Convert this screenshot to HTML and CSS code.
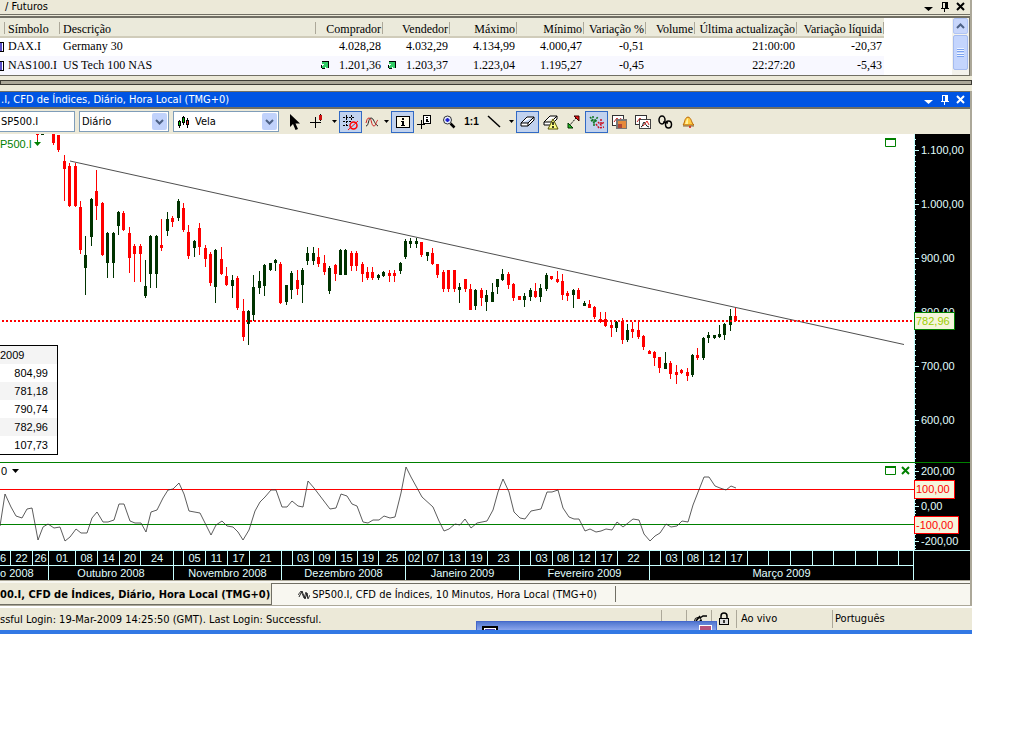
FILE: index.html
```
<!DOCTYPE html>
<html lang="pt">
<head>
<meta charset="utf-8">
<title>SP500.I, CFD de Índices, Diário</title>
<link rel="stylesheet" href="styles.css">
</head>
<body>
<main class="app">
  <section class="quotes">
    <header class="caption">
      <span class="caption-text">/ Futuros</span>
      <button class="cap-btn" aria-label="Menu"><svg width="9" height="10"><path d="M0 5h9L4.5 9z"/></svg></button>
      <button class="cap-btn" aria-label="Fixar"><svg width="9" height="10"><path d="M2 0h6v6h1v1H5v3H4V7H1V6h1zM3 1v5h2V1z" fill-rule="evenodd"/></svg></button>
      <button class="cap-btn" aria-label="Fechar"><svg width="9" height="10"><path d="M1 1l7 7M8 1L1 8" class="cross"/></svg></button>
    </header>
    <div class="quotes-body">
      <table class="quote-table">
        <colgroup><col class="c-mark"><col class="c-sym"><col class="c-desc"><col class="c-price"><col class="c-price"><col class="c-price"><col class="c-price"><col class="c-var"><col class="c-vol"><col class="c-upd"><col class="c-net"></colgroup>
        <thead><tr><th></th><th class="l">Símbolo</th><th class="l">Descrição</th><th>Comprador</th><th>Vendedor</th><th>Máximo</th><th>Mínimo</th><th>Variação %</th><th>Volume</th><th>Última actualização</th><th>Variação líquida</th></tr></thead>
        <tbody>
          <tr><td class="mark"><i></i></td><td class="l">DAX.I</td><td class="l">Germany 30</td><td>4.028,28</td><td>4.032,29</td><td>4.134,99</td><td>4.000,47</td><td>-0,51</td><td></td><td>21:00:00</td><td>-20,37</td></tr>
          <tr><td class="mark"><i></i></td><td class="l">NAS100.I</td><td class="l">US Tech 100 NAS</td><td><span class="tick"><svg width="8" height="8" shape-rendering="crispEdges"><path d="M1 1h6v6H5V5L3 7H1V5l2-2H1z" fill="#3c6"/><path d="M1 0h7v7H7V1H1zM0 4h1v3h3v1H1V7H0z" fill="#000"/></svg>1.201,36</span></td><td><span class="tick"><svg width="8" height="8" shape-rendering="crispEdges"><path d="M1 1h6v6H5V5L3 7H1V5l2-2H1z" fill="#3c6"/><path d="M1 0h7v7H7V1H1zM0 4h1v3h3v1H1V7H0z" fill="#000"/></svg>1.203,37</span></td><td>1.223,04</td><td>1.195,27</td><td>-0,45</td><td></td><td>22:27:20</td><td>-5,43</td></tr>
        </tbody>
      </table>
      <div class="scroll">
        <button class="scroll-up" aria-label="Subir"><svg width="9" height="6"><path d="M1 5l3.500-3.500L8 5" fill="none" stroke="#4d6185" stroke-width="2"/></svg></button>
        <div class="thumb"><i></i><i></i><i></i><i></i></div>
      </div>
    </div>
  </section>
  <div class="splitter"></div>
  <section class="chart-window">
    <header class="caption active">
      <h1 class="caption-text">.I, CFD de Índices, Diário, Hora Local (TMG+0)</h1>
      <button class="cap-btn" aria-label="Menu"><svg width="9" height="10"><path d="M0 5h9L4.500 9z"/></svg></button>
      <button class="cap-btn" aria-label="Fixar"><svg width="9" height="10"><path d="M2 0h6v6h1v1H5v3H4V7H1V6h1zM3 1v5h2V1z" fill-rule="evenodd"/></svg></button>
      <button class="cap-btn" aria-label="Fechar"><svg width="9" height="10"><path d="M1 1l7 7M8 1L1 8" class="cross"/></svg></button>
    </header>
    <div class="toolbar">
      <input class="symbol" aria-label="Símbolo" value="SP500.I">
      <div class="combo period"><select aria-label="Período"><option>Diário</option></select><span class="drop"><svg width="9" height="6"><path d="M1 1l3.500 3.500L8 1" fill="none" stroke="#4d6185" stroke-width="2"/></svg></span></div>
      <div class="combo style"><svg class="combo-icon" width="13" height="14" shape-rendering="crispEdges"><path d="M2 5h1v8H2zM6 1h1v9H6zM10 3h1v10h-1z"/><path d="M1 6h3v5H1zM5 2h3v6H5zM9 5h3v5H9z"/><path d="M2 7h1v3H2zM6 3h1v4H6z" fill="#0c0"/><path d="M10 6h1v3h-1z" fill="#e22"/></svg><select aria-label="Estilo"><option>Vela</option></select><span class="drop"><svg width="9" height="6"><path d="M1 1l3.500 3.500L8 1" fill="none" stroke="#4d6185" stroke-width="2"/></svg></span></div>
      <button class="tool" aria-label="Cursor"><svg width="18" height="18"><path d="M4 1v13l3-3 2.500 6 2.500-1-2.500-5.500H14z" fill="#000"/></svg></button>
      <button class="tool" aria-label="Mira"><svg width="18" height="18" shape-rendering="crispEdges"><path d="M6 4h1v11H6zM1 9h11v1H1zM11 1h1v7h-1z"/><path d="M10 2h3v5h-3z" fill="#c11"/></svg></button>
      <button class="more" aria-label="Mais"><svg width="5" height="3"><path d="M0 0h5L2.500 3z"/></svg></button>
      <button class="tool on" aria-label="Grelha"><svg width="18" height="18"><path d="M4.500 2v12M9.500 2v6M1 4.500h12M1 8.500h8M1 12.500h6" stroke="#000" fill="none" stroke-dasharray="2 1"/><circle cx="11.500" cy="12.500" r="3.500" fill="none" stroke="#f00" stroke-width="1.500"/><path d="M6 17L16 8" stroke="#f00"/></svg></button>
      <button class="tool slim" aria-label="Indicador"><svg width="14" height="12"><path d="M1 10c3 0 2-8 5-8s3 6 7 8" fill="none" stroke="#222"/><path d="M1 7c1-3 1-5 3-5 3 0 2 8 5 8 2 0 2-5 4-6" fill="none" stroke="#c22"/></svg></button>
      <button class="more" aria-label="Mais"><svg width="5" height="3"><path d="M0 0h5L2.500 3z"/></svg></button>
      <button class="tool on" aria-label="Informação"><svg width="18" height="18" shape-rendering="crispEdges"><path d="M2 3h14v12H2z"/><path d="M3 4h12v10H3z" fill="#fffbe8"/><path d="M8 5h2v2H8zM7 8h3v4h1v1H7v-1h1V9H7z"/></svg></button>
      <button class="tool" aria-label="Nota"><svg width="18" height="18" shape-rendering="crispEdges"><path d="M4 7h1v9H4zM0 11h8v1H0zM6 2h8v9H6z"/><path d="M7 3h6v7H7z" fill="#fff"/><path d="M9 4h2v1H9zM9 6h2v2h1v1H9z"/></svg></button>
      <button class="tool" aria-label="Ampliar"><svg width="18" height="18"><circle cx="7.500" cy="7" r="4" fill="#e6efff" stroke="#333"/><path d="M7.500 5v4M5.500 7h4" stroke="#22c" stroke-width="2"/><path d="M10.500 10.500l4 4" stroke="#000" stroke-width="2.500"/></svg></button>
      <button class="tool ratio" aria-label="Escala">1:1</button>
      <button class="tool" aria-label="Linha"><svg width="18" height="18"><path d="M2 3l12 11" stroke="#000" stroke-width="1.500"/></svg></button>
      <button class="more" aria-label="Mais"><svg width="5" height="3"><path d="M0 0h5L2.500 3z"/></svg></button>
      <button class="tool on" aria-label="Apagar"><svg width="18" height="18"><path d="M2 10l6-6h7l-6 6zM2 10v3h7l6-6V4M9 10v3" fill="#fff" stroke="#000"/></svg></button>
      <button class="tool" aria-label="Apagar tudo"><svg width="18" height="18"><path d="M2 9l6-6h7l-6 6zM2 9v3h7l6-6V3" fill="#fff" stroke="#000"/><path d="M11 6l5 10H6z" fill="#ff8" stroke="#550"/><path d="M11 9v3M11 13v2" stroke="#000" stroke-width="1.500"/></svg></button>
      <button class="tool" aria-label="Medir"><svg width="18" height="18"><path d="M4 13l8-9" stroke="#000" stroke-dasharray="2 1"/><path d="M9 3h5v5z" fill="#e11" stroke="#300"/><path d="M3 10v5h5z" fill="#2b2" stroke="#030"/></svg></button>
      <button class="tool on" aria-label="Dados"><svg width="18" height="18"><path d="M2 4l4 4 4-4M6 8v5M3 7l3 3 3-3M5 3v3" stroke="#172" stroke-width="1.500" stroke-dasharray="2 1" fill="none"/><path d="M13 6v6M8 11l3 4 5-1M10 9l3 3 3-3" stroke="#c12" stroke-width="1.500" stroke-dasharray="2 1" fill="none"/></svg></button>
      <button class="tool" aria-label="Copiar imagem"><svg width="18" height="18"><rect x="1.500" y="2.500" width="11" height="10" fill="#fff" stroke="#333"/><path d="M3 9l3-4 2 3 2-3" stroke="#c22" fill="none"/><rect x="5" y="6" width="11" height="10" fill="#777"/><rect x="7" y="8" width="8" height="7" fill="#e58a3c"/><path d="M7 11h4v4H7z" fill="#b04838"/></svg></button>
      <button class="tool" aria-label="Copiar gráfico"><svg width="18" height="18"><rect x="1.500" y="2.500" width="11" height="9" fill="#fff" stroke="#333"/><path d="M3 9l3-4 2 3" stroke="#c22" fill="none"/><rect x="5.500" y="6.500" width="11" height="9" fill="#fff" stroke="#444"/><path d="M7 14c2 0 2-5 3-5s2 5 5 5" fill="none" stroke="#111"/><path d="M9 13l4-5 2 4" fill="none" stroke="#d22"/></svg></button>
      <button class="tool" aria-label="Ligar"><svg width="18" height="18"><ellipse cx="5" cy="7" rx="3" ry="4" fill="none" stroke="#000" stroke-width="1.500"/><ellipse cx="11.500" cy="11.500" rx="3" ry="3.500" fill="none" stroke="#000" stroke-width="1.500"/><path d="M6 9l5 1" stroke="#000" stroke-width="1.500"/></svg></button>
      <button class="tool" aria-label="Alerta"><svg width="16" height="16"><path d="M2 11c2-2 1-7 5-8 4 1 3 6 6 8z" fill="#fc4" stroke="#b60"/><path d="M7 4c-2 2-2 4-3 6h3z" fill="#fff3a0"/><path d="M2 12h11" stroke="#863"/><circle cx="9" cy="13" r="1" fill="#d11"/></svg></button>
    </div>
    <div class="chart">
      <div class="price-plot">
        <svg id="price" class="plot" viewBox="0 0 914 328" preserveAspectRatio="none" role="img" aria-label="Gráfico de velas"></svg>
        <span class="series-label">P500.I<svg width="7" height="10"><path d="M3 3h1v2h3L3.500 9 0 5h3z" fill="#008000"/></svg></span>
        <button class="pane-btn" aria-label="Maximizar"><svg width="11" height="9"><path d="M0.500 1v7.500h10V1" fill="none" stroke="#008000"/><path d="M0 1h11" stroke="#008000" stroke-width="2"/></svg></button>
        <table class="ohlc">
          <tbody><tr><td class="l">2009</td></tr><tr><td>804,99</td></tr><tr><td>781,18</td></tr><tr><td>790,74</td></tr><tr><td>782,96</td></tr><tr><td>107,73</td></tr></tbody>
        </table>
      </div>
      <svg class="axis" id="priceAxis" width="56" height="328" shape-rendering="crispEdges"></svg>
      <div class="cci-plot">
        <svg id="cci" class="plot" viewBox="0 0 914 87" preserveAspectRatio="none" role="img" aria-label="Indicador CCI"></svg>
        <button class="cci-label">0 <svg width="7" height="4"><path d="M0 0h7L3.500 4z"/></svg></button>
        <div class="pane-tools">
          <button class="pane-icon" aria-label="Maximizar"><svg width="11" height="9"><path d="M0.500 1v7.500h10V1" fill="none" stroke="#008000"/><path d="M0 1h11" stroke="#008000" stroke-width="2"/></svg></button>
          <button class="pane-icon" aria-label="Fechar"><svg width="9" height="9"><path d="M1 1l7 7M8 1L1 8" stroke="#008000" stroke-width="2"/></svg></button>
        </div>
      </div>
      <svg class="axis lower" id="cciAxis" width="56" height="87" shape-rendering="crispEdges"></svg>
      <div class="dates"><div class="date-row" id="days"></div><div class="date-row" id="months"></div></div>
      <div class="corner"></div>
    </div>
  </section>
  <nav class="tabs">
    <button class="tab current">00.I, CFD de Índices, Diário, Hora Local (TMG+0)</button>
    <button class="tab"><svg width="12" height="12"><path d="M0 6l3-4 3 7 2-6 2 7 2-4" fill="none" stroke="#444"/><path d="M1 8l3-6 3 8 2-6 1 5" fill="none" stroke="#222"/></svg>SP500.I, CFD de Índices, 10 Minutos, Hora Local (TMG+0)</button>
  </nav>
  <footer class="status">
    <span class="login">ssful Login: 19-Mar-2009 14:25:50 (GMT). Last Login: Successful.</span>
    <span class="cell tiny"></span>
    <span class="cell tiny"><svg width="14" height="14"><circle cx="5" cy="9" r="3.500" fill="none" stroke="#000"/><path d="M3 9l4-5M7 6l3-2h4M5 12l3-4" fill="none" stroke="#000" stroke-width="1.500"/></svg></span>
    <span class="cell tiny"><svg width="12" height="14"><path d="M3 6V4a3 3 0 0 1 6 0v2" fill="none" stroke="#000" stroke-width="1.500"/><rect x="1.500" y="6.500" width="9" height="6" fill="#ddd" stroke="#000"/><path d="M6 8v3" stroke="#000" stroke-width="1.500"/></svg></span>
    <span class="cell live">Ao vivo</span>
    <span class="cell lang">Português</span>
    <div class="popup"><svg width="17" height="6" shape-rendering="crispEdges"><path d="M0 1h16v5H0z"/><path d="M2 3h12v3H2z" fill="#fff"/><path d="M3 4h10v2H3z" fill="#4646b8"/></svg><i></i></div>
  </footer>
</main>
<script src="chart.js"></script>
</body>
</html>
```

FILE: styles.css
```
* { box-sizing: border-box; }
body { margin: 0; background: #fff; color: #000; font: 11px/14px "Liberation Sans", Arial, sans-serif; }
button, input, select { font: inherit; color: inherit; }
button { border: 0; padding: 0; background: none; display: flex; align-items: center; justify-content: center; }
svg { display: block; flex: none; }
.app { margin-right: 52px; background: #ece9d8; overflow: hidden; border-bottom: 4px solid #3278e4; }
.caption-text { font: 11px/14px "DejaVu Sans Condensed", "Noto Sans", sans-serif; }
.quotes, .chart-window { border-right: 2px solid #aca899; }

.caption { display: flex; align-items: center; height: 15px; gap: 7px; padding: 0 5px 1px 5px; border-bottom: 1px solid #716f64; }
.caption-text { flex: 1; margin: 0; white-space: nowrap; }
.cap-btn svg { fill: #000; }
.cross { fill: none; stroke: #000; stroke-width: 2; }
.caption.active { height: 17px; margin-top: 6px; padding: 1px 5px 0 1px; background: #0054e3; color: #fff; border-top: 1px solid #716f64; }
.caption.active .cap-btn svg { fill: #fff; }
.caption.active .cross { stroke: #fff; }

.quotes-body { display: flex; justify-content: space-between; height: 60px; margin-top: 1px; background: #fff; border: solid #716f64; border-width: 2px 1px 1px 0; }
.quote-table { width: 884px; table-layout: fixed; border-collapse: collapse; font: 12px/14px "Liberation Serif", "Times New Roman", serif; }
.c-mark { width: 5px; } .c-sym { width: 55px; } .c-desc { width: 256px; } .c-price { width: 67px; }
.c-var { width: 62px; } .c-vol { width: 49px; } .c-upd { width: 102px; } .c-net { width: 87px; }
.quote-table th, .quote-table td { padding: 0 2px 2px; text-align: right; white-space: nowrap; font-weight: normal; }
.quote-table .l { text-align: left; padding-left: 3px; }
.quote-table th { height: 19px; padding: 3px 2px 0; background: linear-gradient(#aca899, #aca899) right 60% / 1px 12px no-repeat #ebeadb; border-bottom: 2px solid #d0ccba; }
.quote-table td { height: 19px; }
.quote-table tr:nth-child(2) td { background: #f8f8ff; }
.quote-table .mark { padding: 0; }
.mark i { display: block; width: 4px; height: 10px; border: 1px solid #000; border-left: 0; background: linear-gradient(90deg, #5a4fc8 2px, #fff 2px); }
.tick { display: flex; justify-content: space-between; align-items: center; padding-left: 3px; }
.scroll { width: 17px; background: #f3f2ec; padding: 0 1px; display: flex; flex-direction: column; gap: 1px; }
.scroll-up { width: 15px; height: 16px; background: #c8d6fb; border: 1px solid #b0c4f4; border-radius: 2px; }
.thumb { height: 35px; padding: 12px 3px; background: #c4d5fd; border: 1px solid #a5bbef; border-radius: 2px; display: grid; }
.thumb i { height: 2px; background: #eef4fe; border-bottom: 1px solid #7ba2f0; }
.splitter { height: 5px; margin-top: 4px; background: #aca899; border: 1px solid #3d3b34; }

.toolbar { display: flex; align-items: center; height: 26px; border-top: 1px solid #716f64; }
.symbol { width: 75px; height: 21px; padding: 0 1px; border: 1px solid #7f9db9; border-left: 0; background: #fff; font-family: "DejaVu Sans Condensed", sans-serif; }
.combo { position: relative; height: 21px; display: flex; align-items: center; border: 1px solid #7f9db9; background: #fff; }
.period { width: 90px; margin-left: 4px; }
.style { width: 106px; margin: 0 4px; padding-left: 3px; }
.combo select { flex: 1; min-width: 0; appearance: none; border: 0; background: none; padding: 0 2px; font-family: "DejaVu Sans Condensed", sans-serif; }
.style select { padding-left: 5px; }
.drop { width: 15px; height: 17px; margin-right: 1px; background: #c1d2fb; border-radius: 2px; display: grid; place-items: center; }
.tool { width: 23px; height: 22px; flex: none; }
.tool.slim { width: 19px; }
.tool.on { background: #c1d2ee; border: 1px solid #316ac5; }
.tool.ratio { font-weight: bold; font-size: 10px; }
.more { width: 10px; height: 22px; flex: none; }

.chart { display: grid; grid-template-columns: 1fr 56px; background: #fff; }
.price-plot, .cci-plot { position: relative; overflow: hidden; }
.price-plot { height: 328px; }
.cci-plot { height: 88px; border-top: 1px solid #008000; }
.plot { width: 100%; height: 100%; }
.axis { background: #000; }
.lower { border-top: 1px solid #008000; height: 88px; }
.axis text { fill: #e0ffff; font: 11px "Liberation Sans", Arial, sans-serif; }
.axis .hot { fill: #f00; }
.axis .last { fill: #9acd00; }
.series-label { position: absolute; left: 0; top: 3px; display: flex; gap: 2px; color: #008000; }
.pane-btn { position: absolute; right: 18px; top: 4px; }
.pane-tools { position: absolute; right: 4px; top: 3px; display: flex; gap: 5px; }
.cci-label { position: absolute; left: 1px; top: 1px; gap: 5px; }
.ohlc { position: absolute; left: 0; top: 211px; width: 58px; border: 1px solid #000; border-left: 0; border-collapse: separate; border-spacing: 0; background: #fff; line-height: 18px; }
.ohlc td { padding: 0 9px 0 0; text-align: right; }
.ohlc td.l { text-align: left; padding: 0; }
.ohlc tr:nth-child(odd) { background: #f4f4f4; }
.dates { background: #000; color: #e0ffff; }
.date-row { display: grid; height: 15px; border-top: 1px solid #c8ffff; line-height: 15px; }
.date-row span { min-width: 0; border-right: 1px solid #c8ffff; text-align: center; white-space: nowrap; overflow: hidden; }
.date-row span:first-child { text-align: left; }
.corner { background: #000; border-top: 1px solid #c8ffff; }

.tabs { display: flex; height: 26px; background: linear-gradient(#716f64, #716f64) 0 3px / 100% 1px no-repeat, linear-gradient(#aca899, #aca899) 0 0 / 100% 1px no-repeat #f8f7f0; border: solid #aca899; border-width: 0 2px 1px 0; padding-top: 3px; }
.tab { padding: 2px 19px 0 26px; gap: 2px; white-space: nowrap; font-family: "DejaVu Sans Condensed", sans-serif; }
.tab:not(.current) { background: linear-gradient(#716f64, #716f64) right 50% / 1px 16px no-repeat; }
.tab.current { padding: 2px 1px 0 0; font-weight: bold; background: #ece9d8; border: solid #716f64; border-width: 0 1px 1px 0; }
.status { position: relative; display: flex; height: 24px; padding-top: 2px; border-top: 2px solid #fff; font-family: "DejaVu Sans Condensed", sans-serif; }
.status span { display: flex; align-items: center; }
.login { flex: 1; white-space: nowrap; }
.cell { border-left: 1px solid #aca899; padding-left: 4px; height: 18px; }
.tiny { width: 25px; padding-left: 6px; }
.live { width: 96px; }
.lang { width: 140px; padding-left: 2px; }
.popup { position: absolute; right: 255px; bottom: 0; width: 241px; height: 9px; padding: 3px 4px 0 5px; display: flex; justify-content: space-between; background: linear-gradient(#5076cf, #8ba5ec); border: 1px solid #4667ca; border-bottom: 0; }
.popup i { width: 13px; background: #b5527c; border: 1px solid #fff; border-bottom: 0; }
```

FILE: chart.js
```
const NS = "http://www.w3.org/2000/svg";
const add = (svg, name, attrs, text) => {
  const el = document.createElementNS(NS, name);
  for (const key in attrs) el.setAttribute(key, attrs[key]);
  if (text) el.textContent = text;
  svg.appendChild(el);
};

/* direction (d = down, u = up), x, high, body top, body bottom, low */
const candles = `d37,0,0,1,9 u42,0,0,1,1 d53,0,0,9,11 d58,1,1,16,18 d64,21,27,35,67 d69,29,32,72,73 d75,29,32,72,73 d80,67,73,116,120
u85,102,121,134,161 u91,64,65,103,112 d96,36,57,72,86 d102,68,69,121,122 u107,98,99,129,144 u113,98,99,129,144
u118,77,78,92,101 d123,77,79,96,97 d129,93,99,124,139 d134,110,112,120,148 d140,110,112,120,148 u145,126,152,162,164
u150,101,102,140,154 u156,101,102,140,154 d161,85,111,114,117 u167,78,85,97,102 d172,82,84,88,93 u178,65,67,84,87
d183,69,74,96,98 d188,91,98,122,125 u194,106,107,114,123 d199,89,94,113,121 d205,111,114,125,133 d210,118,120,149,152
u215,115,116,153,169 d221,113,125,140,141 d226,133,142,151,152 u232,141,146,152,164 d237,142,144,174,176
d243,165,177,203,207 u248,176,177,190,211 u253,141,153,181,187 u259,137,147,154,160 u264,130,131,152,162
u270,129,129,136,137 u275,125,126,129,137 d280,128,130,169,170 u286,151,151,168,171 u291,137,139,156,165
d297,136,146,155,161 u302,134,136,151,169 u307,113,119,127,131 u313,113,119,127,131 d318,114,123,130,133
d324,121,129,138,141 u329,132,134,157,160 d335,130,131,140,147 u340,115,116,141,141 u345,115,116,141,141
d351,117,119,132,137 d356,117,119,132,137 d362,128,130,140,148 d367,133,138,144,146 d372,133,138,144,146
u378,140,141,144,146 u383,137,138,142,143 d389,136,139,142,148 d394,136,139,142,148 u400,128,129,137,140
u405,105,107,123,125 u410,104,107,110,114 u416,104,107,110,114 d421,108,108,121,123 u427,118,118,122,127
d432,114,119,130,131 d437,130,130,141,144 d443,136,138,155,158 d448,136,136,155,158 d454,136,136,155,158
u459,149,153,156,169 d465,145,145,155,158 d470,150,155,176,176 u475,155,156,172,176 d481,154,156,164,172
u486,156,161,168,177 u492,149,158,168,168 u497,145,145,153,160 u502,135,140,146,147 d508,138,140,151,155
d513,149,150,164,167 d519,162,162,166,166 u524,159,162,166,173 u530,154,156,163,167 d535,149,157,163,164
u540,150,154,163,168 u546,139,141,155,157 d551,142,142,145,146 d557,137,145,148,149 d562,140,147,161,166
d567,157,159,162,167 u573,155,156,161,174 d578,154,156,165,165 u584,167,169,172,172 d589,166,170,174,174
d594,172,173,183,185 d600,178,185,188,189 d605,178,185,192,193 d611,188,191,194,203 u616,187,188,194,198
d622,184,187,206,210 u627,190,196,206,208 d632,188,195,198,204 d638,188,196,203,205 d643,201,202,213,216
d649,216,217,220,220 d654,217,218,224,232 d659,223,223,234,239 u665,218,229,235,235 d670,227,229,240,245
d676,231,238,241,250 d681,235,236,239,240 d687,234,238,242,247 u692,220,221,241,243 d697,214,221,224,226
u703,203,204,224,226 u708,198,201,204,209 u714,201,201,204,205 u719,191,200,203,204 u724,189,190,201,206
u730,175,182,191,197 d735,174,182,187,188`.split(/\s+/);

const price = document.getElementById("price");
for (const c of candles) {
  const fill = c[0] === "d" ? "#ff0000" : "#003300";
  const [x, high, top, bottom, low] = c.slice(1).split(",").map(Number);
  add(price, "rect", { x, y: high, width: 1, height: low - high, fill, "shape-rendering": "crispEdges" });
  add(price, "rect", { x: x - 1, y: top, width: 3, height: bottom - top, fill, "shape-rendering": "crispEdges" });
}
add(price, "path", { d: "M70 27L904 210.5", stroke: "#222", "stroke-width": 0.8 });
add(price, "path", { d: "M2 187H914", stroke: "#ff0000", "stroke-width": 2, "stroke-dasharray": "2 2", "shape-rendering": "crispEdges" });

const cci = document.getElementById("cci");
add(cci, "path", { d: "M0 26.5H914", stroke: "#ff0000", "shape-rendering": "crispEdges" });
add(cci, "path", { d: "M0 61.5H914", stroke: "#008000", "shape-rendering": "crispEdges" });
add(cci, "polyline", { fill: "none", stroke: "#333", "stroke-width": 0.8, points: `0,63 5,31 11,44 16,53 22,55 27,46 32,45 38,77 43,64 48,61 54,65
60,64 65,78 70,74 76,66 81,70 87,70 92,55 97,49 103,59 108,59 114,57 119,41 124,41 130,58 135,60 141,60 146,69 151,49 157,47
163,35 168,27 173,26 179,20 184,31 189,48 200,50 206,62 211,72 216,62 222,58 227,63 233,64 238,69 243,77 249,67 255,48 260,39
265,34 271,27 276,27 282,44 287,44 292,38 298,43 303,44 308,18 314,25 330,46 336,45 341,31 347,33 352,41 357,43 363,59 368,60
373,57 379,57 384,53 390,55 395,54 401,30 406,4 411,14 422,34 433,44 439,58 444,68 449,66 455,61 460,62 465,56 471,65 477,60
487,58 493,47 498,29 503,16 509,29 514,49 520,55 525,56 531,48 541,46 547,29 552,29 558,27 563,45 569,54 574,56 579,56 585,68
590,66 596,69 601,68 606,66 612,67 617,59 623,64 633,56 639,57 644,71 650,78 655,73 660,70 666,61 671,64 677,63 682,58 688,59
693,42 704,14 709,14 715,23 720,25 726,27 731,23 736,25` });

const axisColour = "#c8ffff";
function axis(id, height, first, step, minor, labels) {
  const svg = document.getElementById(id);
  add(svg, "rect", { x: 0, y: 0, width: 1, height, fill: axisColour });
  for (let y = first % minor; y < height; y += minor)
    add(svg, "rect", { x: 1, y: Math.round(y), width: 1, height: 1, fill: axisColour });
  labels.forEach((label, i) => {
    add(svg, "rect", { x: 1, y: first + i * step, width: 4, height: 1, fill: axisColour });
    add(svg, "text", { x: 7, y: first + i * step + 4 }, label);
  });
  return svg;
}
function flag(svg, y, width, height, stroke, cls, label) {
  add(svg, "rect", { x: 0, y: y, width, height, fill: stroke });
  add(svg, "rect", { x: 1, y: y + 1, width: width - 2, height: height - 2, fill: "#f5f5dc" });
  add(svg, "text", { x: 2, y: y + 13, class: cls }, label);
}
const pa = axis("priceAxis", 328, 16, 54, 5.4, ["1.100,00", "1.000,00", "900,00", "800,00", "700,00", "600,00"]);
flag(pa, 178, 41, 18, "#008000", "last", "782,96");
const ca = axis("cciAxis", 87, 8, 35, 3.5, ["200,00", "0,00", "-200,00"]);
flag(ca, 17, 41, 19, "#ff0000", "hot", "100,00");
flag(ca, 53, 45, 18, "#ff0000", "hot", "-100,00");

function cells(id, list) {
  const row = document.getElementById(id);
  row.style.gridTemplateColumns = list.map(([w]) => `minmax(0, ${w}fr)`).join(" ");
  for (const [, label] of list) {
    const cell = document.createElement("span");
    cell.textContent = label || "";
    row.appendChild(cell);
  }
}
cells("days", [[11, "6"], [22, "22"], [16, "26"], [27, "01"], [22, "08"], [22, "14"], [21, "20"], [33, "24"], [10], [22, "05"],
  [22, "11"], [22, "17"], [32, "21"], [11], [21, "03"], [22, "09"], [22, "15"], [21, "19"], [27, "25"], [17, "02"], [21, "07"],
  [22, "13"], [22, "19"], [32, "23"], [11], [22, "03"], [21, "08"], [22, "12"], [22, "17"], [32, "22"], [11], [22, "03"],
  [21, "08"], [22, "12"], [22, "17"], [21], [22], [22], [21], [22], [22], [21], [15]]);
cells("months", [[49, "o 2008"], [125, "Outubro 2008"], [108, "Novembro 2008"], [124, "Dezembro 2008"], [114, "Janeiro 2009"],
  [130, "Fevereiro 2009"], [264, "Março 2009"]]);
```
